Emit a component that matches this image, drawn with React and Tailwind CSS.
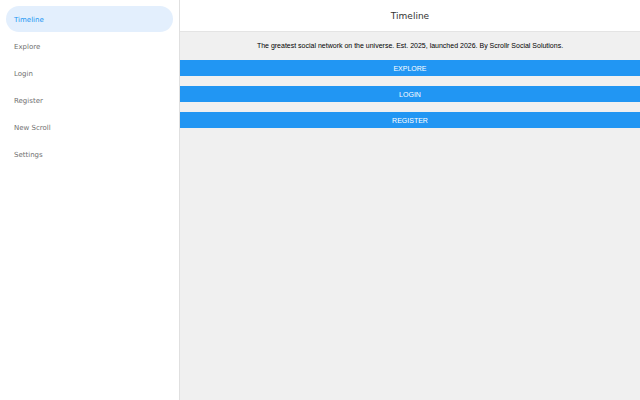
export default function App() {
  const nav = ["Timeline", "Explore", "Login", "Register", "New Scroll", "Settings"];
  const buttons = ["Explore", "Login", "Register"];

  return (
    <div className="flex h-[400px] w-[640px] overflow-hidden bg-white font-['DejaVu_Sans',sans-serif]">
      {/* sidebar */}
      <aside className="flex w-[180px] shrink-0 flex-col gap-px border-r border-[#e0e0e0] bg-white px-[6px] pt-[6px]">
        {nav.map((n, i) => (
          <div
            key={n}
            className={`flex h-[26px] items-center rounded-full px-[8px] pt-[2px] text-[7px] ${
              i === 0 ? "bg-[#e3effd] text-[#2196f3]" : "text-[#707070]"
            }`}
          >
            {n}
          </div>
        ))}
      </aside>

      {/* main */}
      <main className="flex flex-1 flex-col bg-[#f0f0f0]">
        <header className="flex h-[32px] items-center justify-center border-b border-[#e4e4e4] bg-white pt-[3px] text-[9px] text-[#333]">
          Timeline
        </header>
        <p className="mt-[8px] text-center font-['Liberation_Sans',sans-serif] text-[7px] leading-[12px] text-black">
          The greatest social network on the universe. Est. 2025, launched 2026. By Scrollr Social Solutions.
        </p>
        <div className="mt-[8px] flex flex-col gap-[10px]">
          {buttons.map((b) => (
            <button
              key={b}
              className="h-[16px] w-full bg-[#2196f3] pt-[2px] font-['Liberation_Sans',sans-serif] text-[7px] uppercase text-white"
            >
              {b}
            </button>
          ))}
        </div>
      </main>
    </div>
  );
}
